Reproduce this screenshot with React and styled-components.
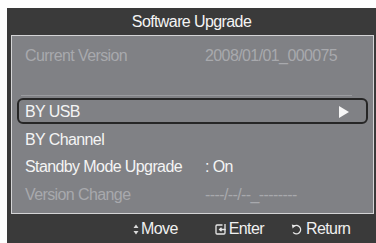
import React from "react";
import styled, { createGlobalStyle } from "styled-components";

const Global = createGlobalStyle`
  body {
    margin: 0;
    background: #ffffff;
    font-family: "Liberation Sans", Arial, sans-serif;
  }
`;

const Screen = styled.div`
  margin: 8px 0 0 7px;
  width: 369px;
  height: 235px;
  background: #3a3a3a;
  display: flex;
  flex-direction: column;
`;

const Title = styled.div`
  height: 27px;
  display: flex;
  align-items: center;
  justify-content: center;
  color: #f4f4f4;
  font-size: 16px;
  letter-spacing: -0.6px;
  padding-top: 1px;
  box-sizing: border-box;
`;

const Panel = styled.div`
  margin: 0 2px 0 4px;
  height: 179px;
  box-sizing: border-box;
  background: #808185;
  border: 1px solid #d4d4d6;
  padding: 4px 5px 0 5px;
`;

const Row = styled.div`
  height: ${(p) => p.h || 27.5}px;
  box-sizing: border-box;
  display: flex;
  align-items: center;
  padding-top: 4px;
  padding-left: 8px;
  font-size: 16px;
  letter-spacing: -0.6px;
  color: ${(p) => (p.dim ? "#a8a9ad" : "#f4f4f4")};
`;

const Selected = styled(Row)`
  border: 2px solid #262626;
  border-radius: 6px;
  padding-top: 2px;
  padding-left: 6px;
  padding-right: 17px;
  justify-content: space-between;
  margin-top: 2px;
`;

const Label = styled.span`
  width: 180px;
`;

const Value = styled.span``;

const Divider = styled.div`
  height: 1px;
  margin: 0 16px 0 4px;
  background: #9b9ca0;
`;

const Footer = styled.div`
  flex: 1;
  display: flex;
  align-items: center;
  padding-left: 126px;
  padding-top: 1px;
  color: #f0f0f0;
  font-size: 16px;
  letter-spacing: -0.6px;
`;

const Hint = styled.span`
  display: flex;
  align-items: center;
  gap: ${(p) => p.gap}px;
  margin-left: ${(p) => p.ml || 0}px;
`;

const MoveIcon = () => (
  <svg width="6" height="11" viewBox="0 0 6 11">
    <path d="M3 0.5 L5.5 4 L0.5 4 Z M3 10.5 L5.5 7 L0.5 7 Z" fill="#dcdcdc" />
  </svg>
);

const EnterIcon = () => (
  <svg width="11" height="11" viewBox="0 0 11 11" fill="none" stroke="#e8e8e8" strokeWidth="1.3">
    <path d="M7.5 1 H2 Q1 1 1 2 V9 Q1 10 2 10 H9 Q10 10 10 9 V5" />
    <path d="M10 0 V5.5 H5" />
    <path d="M6.5 3.8 L4.6 5.5 L6.5 7.2" fill="#e8e8e8" />
  </svg>
);

const ReturnIcon = () => (
  <svg width="11" height="11" viewBox="0 0 11 11" fill="none">
    <path d="M3 2.2 A4.2 4.2 0 1 1 2.2 8.4" stroke="#e8e8e8" strokeWidth="1.4" />
    <path d="M0.8 0.5 L4.6 1.6 L1.6 4.6 Z" fill="#e8e8e8" />
  </svg>
);

const Arrow = () => (
  <svg width="10" height="12" viewBox="0 0 10 12">
    <path d="M0 0 L10 6 L0 12 Z" fill="#f6f6f6" />
  </svg>
);

export default function App() {
  return (
    <>
      <Global />
      <Screen>
        <Title>Software Upgrade</Title>
        <Panel>
          <Row dim>
            <Label>Current Version</Label>
            <Value>2008/01/01_000075</Value>
          </Row>
          <Row dim />
          <Divider />
          <Selected h={26}>
            <span>BY USB</span>
            <Arrow />
          </Selected>
          <Row>BY Channel</Row>
          <Row>
            <Label>Standby Mode Upgrade</Label>
            <Value>: On</Value>
          </Row>
          <Row dim>
            <Label>Version Change</Label>
            <Value>----/--/--_--------</Value>
          </Row>
        </Panel>
        <Footer>
          <Hint gap={2}>
            <MoveIcon />
            Move
          </Hint>
          <Hint gap={3} ml={37}>
            <EnterIcon />
            Enter
          </Hint>
          <Hint gap={4} ml={27}>
            <ReturnIcon />
            Return
          </Hint>
        </Footer>
      </Screen>
    </>
  );
}
